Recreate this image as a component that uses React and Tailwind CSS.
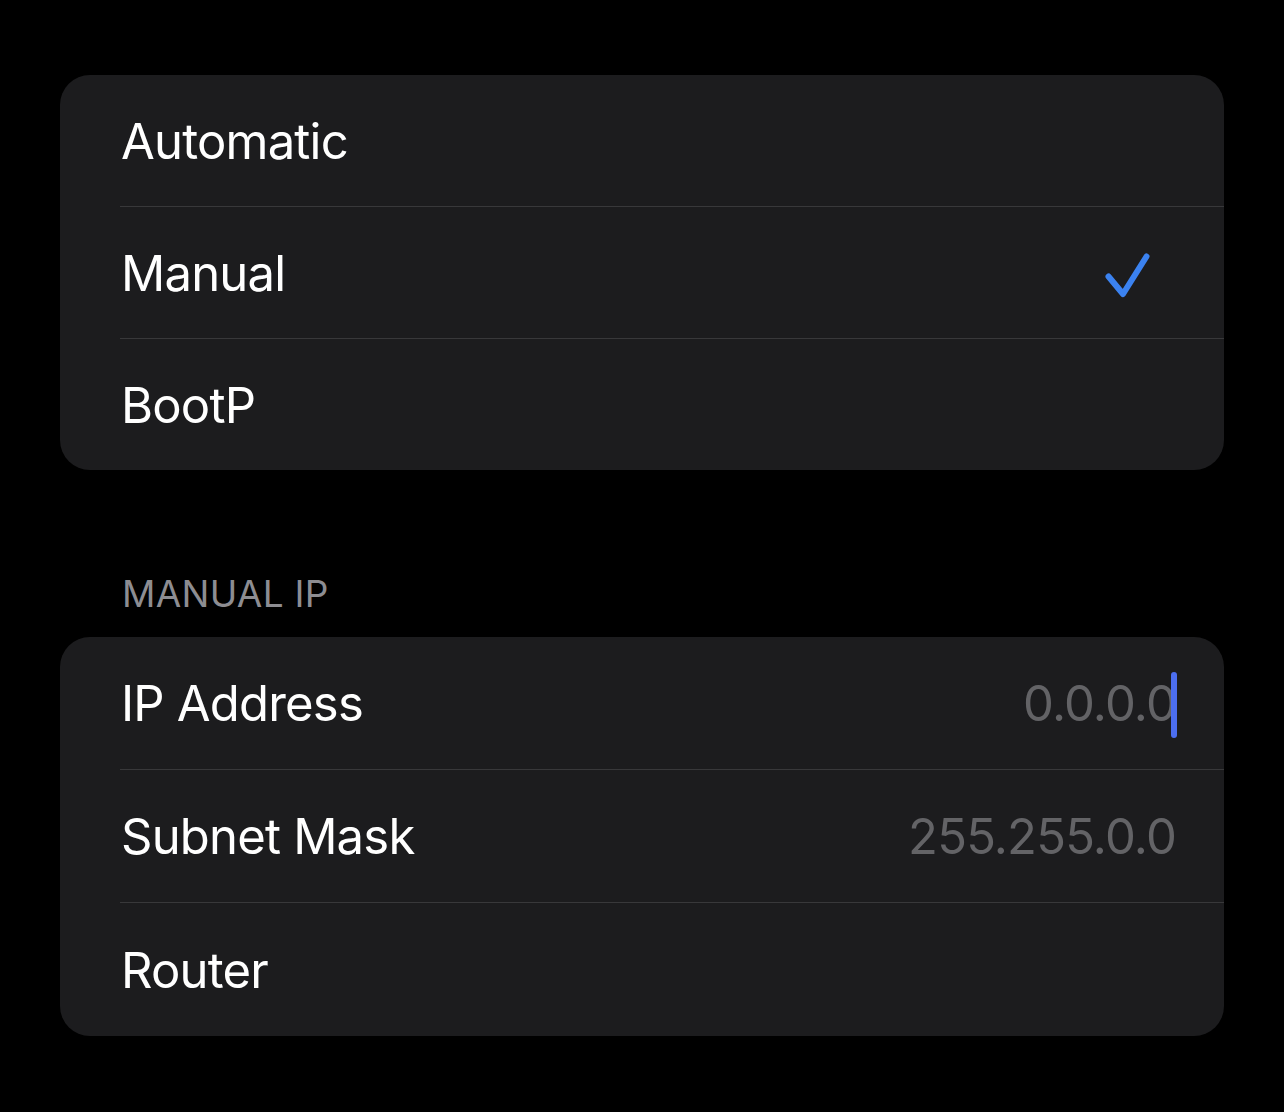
const modes = [
  { label: 'Automatic', checked: false },
  { label: 'Manual', checked: true },
  { label: 'BootP', checked: false },
];

const fields = [
  { label: 'IP Address', value: '0.0.0.0', focused: true },
  { label: 'Subnet Mask', value: '255.255.0.0' },
  { label: 'Router', value: '' },
];

function Check() {
  return (
    <svg width="48" height="48" viewBox="0 0 48 48" fill="none" className="mr-[24px]">
      <path
        d="M4.5 26.5 L19 44 L42.5 6.5"
        stroke="#3b82f0"
        strokeWidth="6"
        strokeLinecap="round"
        strokeLinejoin="round"
      />
    </svg>
  );
}

function Row({ children, last, h }) {
  return (
    <div className="pl-[60px]">
      <div
        className={`${h} flex items-center justify-between pl-[1px] pr-[48px] pt-[2px] ${
          last ? '' : 'border-b border-[#38383a]'
        }`}
      >
        {children}
      </div>
    </div>
  );
}

export default function App() {
  return (
    <div
      className="min-h-[1112px] bg-black px-[60px] pt-[75px] text-white"
      style={{ fontFamily: 'Inter, "Noto Sans", sans-serif' }}
    >
      <div className="bg-[#1c1c1e] rounded-[30px] overflow-hidden">
        {modes.map((m, i) => (
          <Row key={m.label} last={i === modes.length - 1} h={i === 2 ? 'h-[131px]' : 'h-[132px]'}>
            <span className="text-[49px] tracking-[-0.8px]">{m.label}</span>
            {m.checked && <Check />}
          </Row>
        ))}
      </div>

      <div className="mt-[105px] mb-[25px] pl-[62px] text-[37px] text-[#8d8d92] tracking-[0.3px] leading-none">
        MANUAL IP
      </div>

      <div className="bg-[#1c1c1e] rounded-[30px] overflow-hidden">
        {fields.map((f, i) => (
          <Row key={f.label} last={i === fields.length - 1} h="h-[133px]">
            <span className="text-[49px] tracking-[-0.8px]">{f.label}</span>
            <span className="relative text-[49px] tracking-[-0.8px] text-[#636366]">
              {f.value}
              {f.focused && (
                <span className="absolute right-[-1px] top-[5px] w-[6px] h-[66px] rounded-full bg-[#4c6ef0]" />
              )}
            </span>
          </Row>
        ))}
      </div>
    </div>
  );
}
